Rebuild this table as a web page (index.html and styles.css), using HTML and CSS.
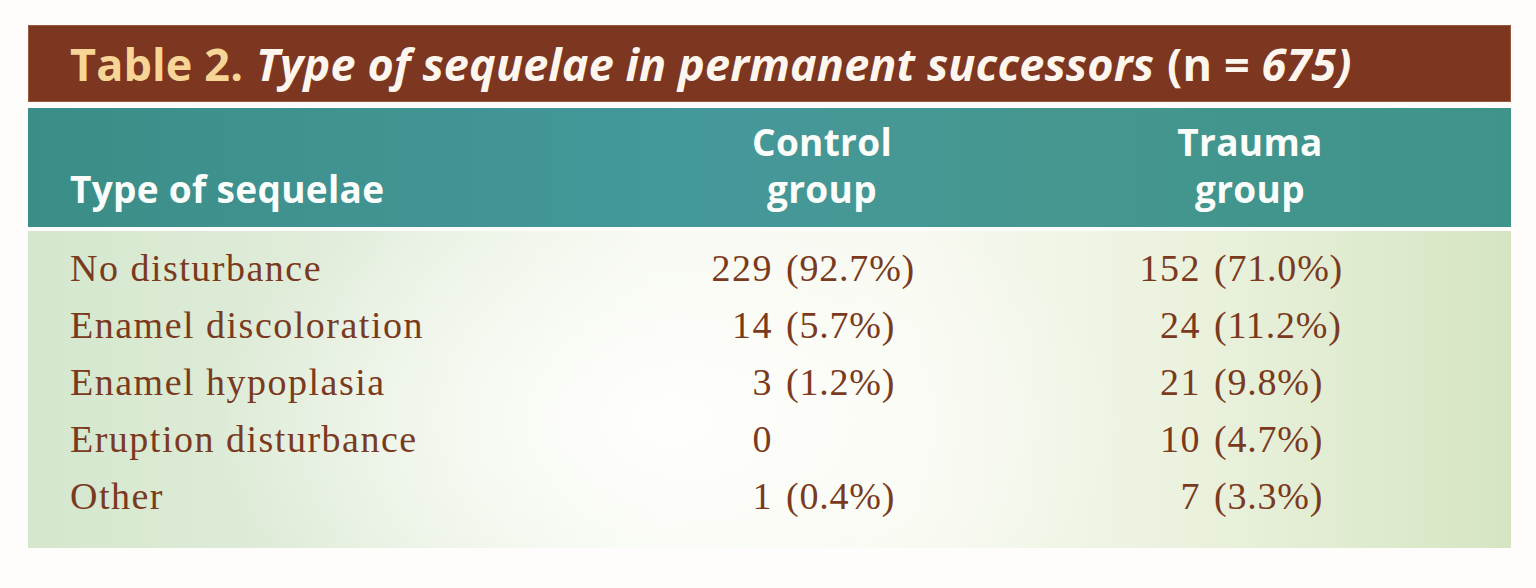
FILE: index.html
```html
<!DOCTYPE html>
<html lang="en">
<head>
<meta charset="utf-8">
<title>Table 2</title>
<link rel="stylesheet" href="styles.css">
</head>
<body>
<div class="page">
  <div class="table">
    <div class="title">
      <span class="t-num">Table 2.</span>
      <span class="t-it">Type of sequelae in permanent successors</span>
      <span class="t-n">(n =</span><span class="t-it"> 675)</span>
    </div>
    <div class="head">
      <div class="h-label">Type of sequelae</div>
      <div class="h-col">Control<br>group</div>
      <div class="h-spacer"></div>
      <div class="h-col">Trauma<br>group</div>
    </div>
    <div class="body">
      <div class="row">
        <div class="label">No disturbance</div>
        <div class="num">229</div><div class="pct">(92.7%)</div>
        <div class="num">152</div><div class="pct">(71.0%)</div>
      </div>
      <div class="row">
        <div class="label">Enamel discoloration</div>
        <div class="num">14</div><div class="pct">(5.7%)</div>
        <div class="num">24</div><div class="pct">(11.2%)</div>
      </div>
      <div class="row">
        <div class="label">Enamel hypoplasia</div>
        <div class="num">3</div><div class="pct">(1.2%)</div>
        <div class="num">21</div><div class="pct">(9.8%)</div>
      </div>
      <div class="row">
        <div class="label">Eruption disturbance</div>
        <div class="num">0</div><div class="pct"></div>
        <div class="num">10</div><div class="pct">(4.7%)</div>
      </div>
      <div class="row">
        <div class="label">Other</div>
        <div class="num">1</div><div class="pct">(0.4%)</div>
        <div class="num">7</div><div class="pct">(3.3%)</div>
      </div>
    </div>
  </div>
</div>
</body>
</html>
```

FILE: styles.css
```css
* { box-sizing: border-box; }
html, body {
  margin: 0;
  padding: 0;
  background: #fefdfb;
}
.page {
  width: 1536px;
  height: 588px;
  padding: 25px 25px 0 28px;
}
.table {
  width: 1483px;
  display: flex;
  flex-direction: column;
}
.title {
  height: 77px;
  background: #7d3620;
  border: 1px solid #9a5a40;
  display: flex;
  align-items: center;
  padding-left: 41px;
  font-family: "Open Sans", sans-serif;
  font-weight: 700;
  font-size: 45px;
  color: #fdf6ee;
  white-space: pre;
  letter-spacing: 0.1px;
}
.t-num { color: #f6d597; margin-right: 13px; }
.t-it { font-style: italic; }
.t-n { margin-left: 13px; }
.head {
  margin-top: 6px;
  height: 119px;
  background: linear-gradient(90deg, #3b8e87 0%, #45989a 45%, #45978f 70%, #3e938a 100%);
  display: grid;
  grid-template-columns: 630px 244px 184px 244px;
  align-items: end;
  padding: 0 0 15px 42px;
  font-family: "Open Sans", sans-serif;
  font-weight: 700;
  font-size: 37px;
  line-height: 47px;
  letter-spacing: 0.3px;
  color: #fbfdfb;
}
.h-col { text-align: center; }
.body {
  margin-top: 4px;
  height: 317px;
  background:
    radial-gradient(ellipse 460px 260px at 640px 190px, rgba(255,255,253,0.95), rgba(255,255,253,0) 100%),
    linear-gradient(90deg, #d4e7cd 0%, #e1edda 20%, #f5f8ef 42%, #f7f9ef 60%, #e9f1dc 80%, #d5e5c2 100%);
  padding: 9px 0 0 42px;
  font-family: "Liberation Serif", serif;
  font-size: 38px;
  color: #7a3a20;
}
.row {
  display: grid;
  grid-template-columns: 605px 100px 300px 128px 200px;
  height: 57px;
  line-height: 57px;
  letter-spacing: 1.5px;
}
.num { text-align: right; padding-right: 2px; }
.pct { padding-left: 11px; letter-spacing: 0.8px; }
```
